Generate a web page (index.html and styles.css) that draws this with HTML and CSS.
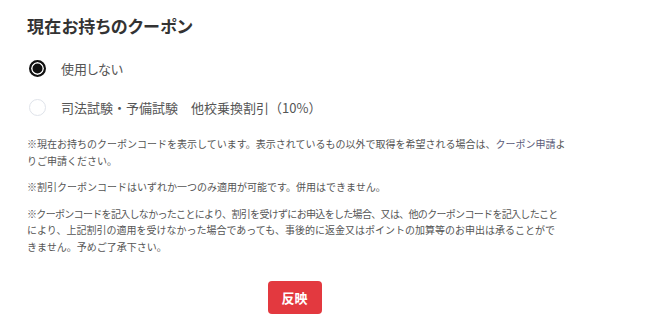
FILE: index.html
```html
<!DOCTYPE html>
<html lang="ja">
<head>
<meta charset="utf-8">
<link rel="stylesheet" href="styles.css">
</head>
<body>
<div class="coupon">
  <h2 class="title">現在お持ちのクーポン</h2>
  <div class="options">
    <label class="option">
      <span class="radio checked"></span>
      <span class="option-text">使用しない</span>
    </label>
    <label class="option">
      <span class="radio"></span>
      <span class="option-text">司法試験・予備試験　他校乗換割引（10%）</span>
    </label>
  </div>
  <div class="notes">
    <p>※現在お持ちのクーポンコードを表示しています。表示されているもの以外で取得を希望される場合は、<a class="link" href="#">クーポン申請</a>よ<br>りご申請ください。</p>
    <p>※割引クーポンコードはいずれか一つのみ適用が可能です。併用はできません。</p>
    <p><span class="tight">※クーポンコードを記入しなかったことにより、割引を受けずにお申込をした場合、又は、他のクーポンコードを記入したこと</span><br>により、上記割引の適用を受けなかった場合であっても、事後的に返金又はポイントの加算等のお申出は承ることがで<br>きません。予めご了承下さい。</p>
  </div>
  <div class="actions">
    <button class="apply">反映</button>
  </div>
</div>
</body>
</html>
```

FILE: styles.css
```css
html, body {
  margin: 0;
  padding: 0;
  background: #ffffff;
}
body {
  font-family: "Noto Sans CJK JP", "Noto Sans", sans-serif;
  color: #555;
}
.coupon {
  width: 535px;
  padding: 12px 0 0 27px;
}
.title {
  margin: 0;
  font-size: 17px;
  line-height: 28px;
  font-weight: 700;
  color: #333;
  font-feature-settings: "palt";
  letter-spacing: 0.3px;
}
.options {
  display: flex;
  flex-direction: column;
  gap: 21px;
  margin-top: 19px;
  padding-left: 2px;
}
.option {
  display: flex;
  align-items: center;
  gap: 15px;
  height: 18px;
}
.radio {
  box-sizing: border-box;
  width: 17px;
  height: 17px;
  border-radius: 50%;
  border: 1.5px solid #dfe3ea;
  background: #fff;
  flex: none;
}
.radio.checked {
  border: 2.5px solid #111;
  box-shadow: inset 0 0 0 1.5px #fff;
  background: #111;
}
.option-text {
  font-size: 13px;
  color: #555;
}
.option:first-child .option-text {
  font-feature-settings: "palt";
}
.notes {
  margin-top: 20px;
  width: 560px;
  font-size: 10px;
  line-height: 16.5px;
  color: #555;
  white-space: nowrap;
}
.notes p {
  margin: 0 0 10px;
}
.tight {
  letter-spacing: -0.68px;
}
.link {
  color: #5a5a78;
  text-decoration: none;
}
.actions {
  display: flex;
  justify-content: center;
  margin-top: 26px;
}
.apply {
  width: 54px;
  height: 33px;
  border: none;
  border-radius: 4px;
  background: #e3393f;
  color: #fff;
  font-family: "Noto Sans CJK JP", sans-serif;
  font-size: 13px;
  font-weight: 700;
  padding: 0;
}
```
